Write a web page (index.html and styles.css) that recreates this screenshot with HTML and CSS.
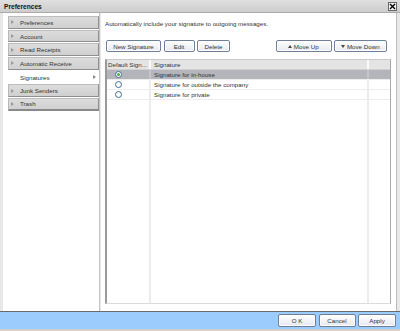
FILE: index.html
```html
<!DOCTYPE html>
<html>
<head>
<meta charset="utf-8">
<link rel="stylesheet" href="styles.css">
</head>
<body>
<div class="win">
  <div class="titlebar">
    <span class="title">Preferences</span>
    <span class="close"><svg width="7" height="7" viewBox="0 0 7 7"><path d="M1 1 L6 6 M6 1 L1 6" stroke="#000" stroke-width="1.4"/></svg></span>
  </div>
  <div class="main">
    <nav class="nav">
      <div class="item"><span class="arr"></span>Preferences</div>
      <div class="item"><span class="arr"></span>Account</div>
      <div class="item"><span class="arr"></span>Read Receipts</div>
      <div class="item"><span class="arr"></span>Automatic Receive</div>
      <div class="item sel">Signatures<span class="arr-r"></span></div>
      <div class="item"><span class="arr"></span>Junk Senders</div>
      <div class="item last"><span class="arr"></span>Trash</div>
    </nav>
    <section class="content">
      <p class="desc">Automatically include your signature to outgoing messages.</p>
      <div class="toolbar">
        <div class="grp">
          <button class="btn w-new">New Signature</button>
          <button class="btn w-edit">Edit</button>
          <button class="btn w-del">Delete</button>
        </div>
        <div class="grp">
          <button class="btn w-up"><span class="tri-up"></span>Move Up</button>
          <button class="btn w-down"><span class="tri-down"></span>Move Down</button>
        </div>
      </div>
      <div class="grid">
        <div class="row head">
          <div class="c1">Default Sign...</div>
          <div class="c2">Signature</div>
          <div class="c3"></div>
        </div>
        <div class="row selrow">
          <div class="c1"><span class="radio on"></span></div>
          <div class="c2">Signature for in-house</div>
          <div class="c3"></div>
        </div>
        <div class="row">
          <div class="c1"><span class="radio"></span></div>
          <div class="c2">Signature for outside the company</div>
          <div class="c3"></div>
        </div>
        <div class="row">
          <div class="c1"><span class="radio"></span></div>
          <div class="c2">Signature for private</div>
          <div class="c3"></div>
        </div>
        <div class="row filler">
          <div class="c1"></div>
          <div class="c2"></div>
          <div class="c3"></div>
        </div>
      </div>
    </section>
  </div>
  <div class="footer">
    <button class="btn f-ok">O K</button>
    <button class="btn f-cancel">Cancel</button>
    <button class="btn f-apply">Apply</button>
  </div>
</div>
</body>
</html>
```
FILE: styles.css
```css
* { box-sizing: border-box; }
html, body { margin: 0; padding: 0; }
body {
  font-family: "Liberation Sans", Arial, sans-serif;
  font-size: 6.2px;
  color: #333;
  background: #e8e8e8;
}
.win {
  width: 400px;
  height: 331px;
  display: flex;
  flex-direction: column;
  background: #e8e8e8;
}
.titlebar {
  height: 13px;
  flex: none;
  display: flex;
  align-items: center;
  justify-content: space-between;
  padding: 0 3px 0 4px;
  background: linear-gradient(#e0e0e0, #cdcdcd);
  border-bottom: 1px solid #ababab;
}
.title {
  font-weight: bold;
  font-size: 6.6px;
  color: #111;
}
.close {
  width: 9px;
  height: 9px;
  border: 1px solid #666;
  background: #f4f4f4;
  display: flex;
  align-items: center;
  justify-content: center;
}
.close svg { display: block; }
.main {
  flex: 1;
  display: flex;
  padding: 0 3px 0 3px;
  min-height: 0;
}
.nav {
  width: 97px;
  flex: none;
  background: #fff;
  border-right: 1px solid #c4c4c4;
  padding: 3px 0 0 5px;
}
.item {
  height: 12.7px;
  margin-bottom: 1px;
  display: flex;
  align-items: center;
  white-space: nowrap;
  background: linear-gradient(#dcdcdc, #d0d0d0);
  border: 1px solid;
  border-color: #bdbdbd #8f8f8f #8f8f8f #b8b8b8;
  color: #333;
  padding-left: 2px;
}
.item.last {
  border-bottom: 2px solid #8a8a8a;
}
.arr {
  width: 0;
  height: 0;
  border-left: 3px solid #9a9a9a;
  border-top: 2px solid transparent;
  border-bottom: 2px solid transparent;
  margin-right: 6px;
}
.item.sel {
  background: #fff;
  border-color: #fff;
  padding-left: 11px;
  justify-content: space-between;
  padding-right: 2px;
}
.arr-r {
  width: 0;
  height: 0;
  border-left: 3px solid #8a8a8a;
  border-top: 2px solid transparent;
  border-bottom: 2px solid transparent;
}
.content {
  flex: 1;
  background: #fff;
  margin-left: 1px;
  border-right: 1px solid #bcbcbc;
  padding: 0 5px 7px 4px;
  display: flex;
  flex-direction: column;
}
.desc {
  margin: 7px 0 0 0;
  height: 8px;
  line-height: 8px;
  white-space: nowrap;
}
.toolbar {
  display: flex;
  justify-content: space-between;
  margin-top: 12px;
  padding: 0 4px 0 1px;
}
.grp { display: flex; gap: 2.5px; }
.btn {
  font-family: "Liberation Sans", Arial, sans-serif;
  font-size: 6.2px;
  color: #333;
  height: 12px;
  padding: 0;
  margin: 0;
  border: 1px solid #6f7f98;
  border-radius: 2px;
  background: linear-gradient(#ffffff, #e6e9f0);
  box-shadow: inset 0 0 0 1px #fff;
  display: flex;
  align-items: center;
  justify-content: center;
  white-space: nowrap;
}
.w-new { width: 55px; }
.w-edit { width: 31px; }
.w-del { width: 33px; }
.w-up { width: 56px; }
.w-down { width: 53px; }
.tri-up, .tri-down {
  width: 0;
  height: 0;
  border-left: 2.5px solid transparent;
  border-right: 2.5px solid transparent;
  margin-right: 1.5px;
}
.tri-up { border-bottom: 3px solid #444; }
.tri-down { border-top: 3px solid #444; }
.grid {
  flex: 1;
  margin-top: 7px;
  border-left: 2px solid #9a9a9a;
  border-top: 1px solid #c8c8c8;
  border-right: 1px solid #a8a8a8;
  border-bottom: 1px solid #dcdcdc;
  display: flex;
  flex-direction: column;
  min-height: 0;
}
.row {
  display: flex;
  height: 10px;
  flex: none;
  border-bottom: 1px solid #ededed;
}
.row > div {
  display: flex;
  align-items: center;
  border-right: 2px solid #ececec;
  padding-left: 2px;
  white-space: nowrap;
  overflow: hidden;
}
.c1 { width: 44px; }
.c2 { width: 218px; padding-left: 3px !important; }
.c3 { flex: 1; border-right: none !important; }
.head { background: #e4e4e4; border-bottom: 1px solid #d0d0d0; }
.head > div { border-right-color: #fafafa; }
.selrow { background: #b4b4bb; }
.selrow > div { border-right-color: #c4c4ca; }
.row .c1 { justify-content: flex-start; padding-left: 8px; }
.head .c1 { padding-left: 1px; }
.filler { flex: 1; border-bottom: none; }
.radio {
  width: 7px;
  height: 7px;
  border-radius: 50%;
  border: 1px solid #3f6c96;
  background: #fff;
  display: flex;
  align-items: center;
  justify-content: center;
  flex: none;
}
.radio.on::after {
  content: "";
  width: 3px;
  height: 3px;
  border-radius: 50%;
  background: #3cb43c;
}
.footer {
  height: 20px;
  flex: none;
  background: #9ccbfd;
  border-top: 1px solid #6a6a6a;
  border-bottom: 2px solid #d0d0d0;
  display: flex;
  justify-content: flex-end;
  align-items: center;
  gap: 2.5px;
  padding-right: 4px;
}
.footer .btn { height: 13px; }
.f-ok { width: 38px; }
.f-cancel { width: 37px; }
.f-apply { width: 38px; }
```
